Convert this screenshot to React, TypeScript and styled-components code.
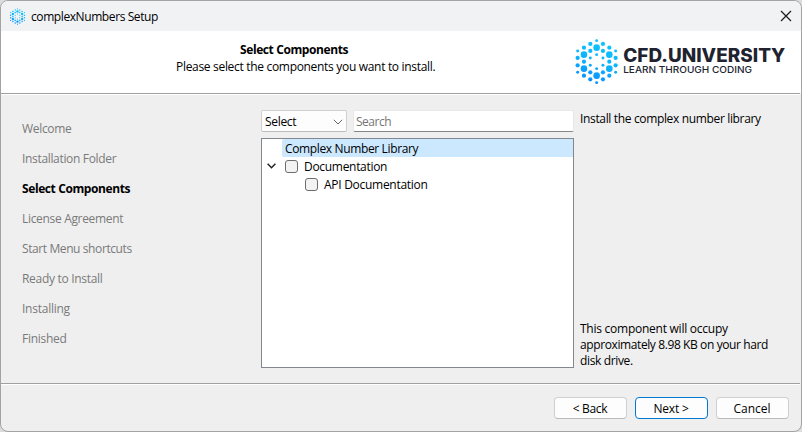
import React from "react";
import styled, { createGlobalStyle } from "styled-components";

const GlobalStyle = createGlobalStyle`
  *, *::before, *::after { box-sizing: border-box; }
  html, body { margin: 0; padding: 0; background: #dcdcdc; }
  body { font: 12px/16px "Open Sans", "Noto Sans", sans-serif; color: #000; }
`;

const Label = styled.span<{ $track?: number; $bold?: boolean; $shift?: number }>`
  display: block;
  white-space: nowrap;
  letter-spacing: ${(p) => p.$track ?? -0.35}px;
  font-weight: ${(p) => (p.$bold ? 700 : 400)};
  margin-left: ${(p) => p.$shift ?? 0}px;
`;

const Window = styled.div`
  display: flex;
  flex-direction: column;
  width: 802px;
  height: 432px;
  border: 1px solid #a3a3a3;
  border-radius: 8px;
  overflow: hidden;
  background: #efefef;
`;

const TitleBar = styled.header`
  display: flex;
  align-items: center;
  height: 30px;
  flex: none;
  padding: 0 9px 0 8px;
  background: #f1f2f4;
`;

const TitleText = styled.div`
  flex: 1;
  margin-left: 5px;
  padding-top: 1px;
`;

const CloseButton = styled.button`
  display: flex;
  padding: 0;
  border: 0;
  background: none;
`;

const Banner = styled.section`
  display: flex;
  height: 62px;
  flex: none;
  background: #fff;
`;

const BannerText = styled.div`
  display: flex;
  flex-direction: column;
  align-items: flex-start;
  gap: 1px;
  width: 573px;
  padding: 11px 0 0 175px;
`;

const Divider = styled.hr`
  width: 799px;
  height: 2px;
  flex: none;
  margin: 0;
  border: 0;
  border-top: 1px solid #a0a0a0;
  background: #fff;
`;

const Content = styled.main`
  display: flex;
  height: 288px;
  flex: none;
`;

const Steps = styled.nav`
  display: flex;
  flex-direction: column;
  gap: 14px;
  width: 260px;
  padding: 26px 0 0 21px;
`;

const Step = styled.div<{ $current?: boolean }>`
  height: 16px;
  color: ${(p) => (p.$current ? "#000" : "#7a7a7a")};
`;

const Picker = styled.div`
  display: flex;
  flex-direction: column;
  gap: 6px;
  width: 313px;
  padding-top: 15px;
`;

const Filters = styled.div`
  display: flex;
  gap: 6px;
  height: 22px;
`;

const SelectBox = styled.div`
  display: flex;
  align-items: center;
  justify-content: space-between;
  width: 86px;
  padding: 1px 3px 0 3px;
  border: 1px solid #d0d0d0;
  border-bottom-color: #bcbcbc;
  border-radius: 2px;
  background: #fdfdfd;
`;

const SearchBox = styled.div`
  flex: 1;
  padding: 3px 0 0 2px;
  border: 1px solid #e8e8e8;
  border-bottom-color: #868686;
  border-radius: 2px;
  background: #fff;
  color: #767676;
`;

const Tree = styled.div`
  height: 230px;
  border: 1px solid #828790;
  background: #fff;
`;

const TreeRow = styled.div<{ $depth: number }>`
  display: flex;
  align-items: center;
  height: 18px;
  line-height: 18px;
  padding-left: ${(p) => p.$depth * 20}px;
`;

const Expander = styled.div`
  display: flex;
  width: 20px;
  padding-left: 5px;
`;

const Item = styled.div<{ $selected?: boolean }>`
  display: flex;
  align-items: center;
  flex: 1;
  gap: 6px;
  height: 18px;
  padding-left: 3px;
  border-radius: 2px 0 0 2px;
  background: ${(p) => (p.$selected ? "#cce8ff" : "transparent")};

  ${Label} {
    padding-top: 2px;
  }
`;

const CheckBox = styled.span`
  width: 13px;
  height: 13px;
  border: 1px solid #6d6d6d;
  border-radius: 3px;
  background: #f3f3f3;
`;

const Details = styled.aside`
  display: flex;
  flex-direction: column;
  justify-content: space-between;
  padding: 16px 0 14px 6px;
`;

const Footer = styled.footer`
  display: flex;
  justify-content: flex-end;
  gap: 8px;
  padding: 12px 12px 0 0;
`;

const Button = styled.button<{ $primary?: boolean }>`
  display: flex;
  align-items: center;
  justify-content: center;
  width: 73px;
  height: 22px;
  padding: 1px 1px 0 0;
  border: 1px solid ${(p) => (p.$primary ? "#0078d4" : "#d0d0d0")};
  border-bottom-color: ${(p) => (p.$primary ? "#0078d4" : "#bababa")};
  border-radius: 4px;
  background: #fdfdfd;
  color: #000;
  font: inherit;
`;

const DOTS: [number, number, number][] = [
  [79, 31, 4.4], [60, 41, 6.3], [98, 41, 6.3], [41, 52, 6.3], [79, 52, 9.8], [117, 52, 6.3],
  [22, 62, 4.4], [60, 62, 6.3], [98, 62, 6.3], [136, 62, 4.4], [41, 73, 9.8], [79, 73, 4.4],
  [117, 73, 9.8], [22, 83, 6.3], [60, 83, 4.4], [98, 83, 4.4], [136, 83, 6.3], [41, 94, 6.3],
  [117, 94, 6.3], [22, 105, 6.3], [60, 105, 4.4], [98, 105, 4.4], [136, 105, 6.3], [41, 115, 9.8],
  [79, 115, 4.4], [117, 115, 9.8], [22, 126, 4.4], [60, 126, 6.3], [98, 126, 6.3], [136, 126, 4.4],
  [41, 136, 6.3], [79, 136, 9.8], [117, 136, 6.3], [60, 147, 6.3], [98, 147, 6.3], [79, 157, 4.4],
];

const Dots = ({ id }: { id: string }) => (
  <>
    <defs>
      <linearGradient id={id} gradientUnits="userSpaceOnUse" x1="100" y1="30" x2="58" y2="158">
        <stop offset="0" stopColor="#0cc6ff" />
        <stop offset="0.5" stopColor="#0cb4fd" />
        <stop offset="1" stopColor="#0a8dff" />
      </linearGradient>
    </defs>
    <g fill={`url(#${id})`}>
      {DOTS.map(([x, y, r]) => (
        <circle key={`${x}-${y}`} cx={x} cy={y} r={r} />
      ))}
    </g>
  </>
);

const AppIcon = () => (
  <svg width="17" height="17" viewBox="10 24 138 140">
    <Dots id="iconTint" />
  </svg>
);

const BrandLogo = () => (
  <svg width="222" height="62" viewBox="574 31 222 62">
    <g transform="translate(570.3 30.3) scale(0.33333)">
      <Dots id="logoTint" />
    </g>
    <g fill="#20232f" fontFamily="Inter, sans-serif">
      <text x="623.3" y="62.3" fontSize="18.3" fontWeight="800" textLength="162" lengthAdjust="spacingAndGlyphs">
        CFD.UNIVERSITY
      </text>
      <text x="623.2" y="73.3" fontSize="9.3" fontWeight="500" textLength="128.8" lengthAdjust="spacingAndGlyphs">
        LEARN THROUGH CODING
      </text>
    </g>
  </svg>
);

const STEPS: { name: string; track: number; current?: boolean }[] = [
  { name: "Welcome", track: -0.32 },
  { name: "Installation Folder", track: -0.33 },
  { name: "Select Components", track: -0.4, current: true },
  { name: "License Agreement", track: -0.32 },
  { name: "Start Menu shortcuts", track: -0.4 },
  { name: "Ready to Install", track: -0.3 },
  { name: "Installing", track: -0.25 },
  { name: "Finished", track: -0.28 },
];

export default function App() {
  return (
    <>
      <GlobalStyle />
      <Window>
        <TitleBar>
          <AppIcon />
          <TitleText>
            <Label $track={-0.41}>complexNumbers Setup</Label>
          </TitleText>
          <CloseButton aria-label="Close">
            <svg width="12" height="12" viewBox="0 0 12 12" fill="none" stroke="#1a1a1a" strokeWidth="1.2">
              <path d="M1 1L11 11M11 1L1 11" />
            </svg>
          </CloseButton>
        </TitleBar>
        <Banner>
          <BannerText>
            <Label $bold $track={-0.4} $shift={64}>Select Components</Label>
            <Label $track={-0.311}>Please select the components you want to install.</Label>
          </BannerText>
          <BrandLogo />
        </Banner>
        <Divider />
        <Content>
          <Steps>
            {STEPS.map((s) => (
              <Step key={s.name} $current={s.current}>
                <Label $bold={s.current} $track={s.track}>{s.name}</Label>
              </Step>
            ))}
          </Steps>
          <Picker>
            <Filters>
              <SelectBox>
                <Label $track={-0.32}>Select</Label>
                <svg width="10" height="6" viewBox="0 0 10 6" fill="none" stroke="#666" strokeWidth="1">
                  <path d="M0.8 0.8L5 5L9.2 0.8" />
                </svg>
              </SelectBox>
              <SearchBox>
                <Label $track={-0.5}>Search</Label>
              </SearchBox>
            </Filters>
            <Tree>
              <TreeRow $depth={0}>
                <Expander />
                <Item $selected>
                  <Label $track={-0.36}>Complex Number Library</Label>
                </Item>
              </TreeRow>
              <TreeRow $depth={0}>
                <Expander>
                  <svg width="9" height="6" viewBox="0 0 9 6" fill="none" stroke="#222" strokeWidth="1.5">
                    <path d="M0.6 0.8L4.5 4.7L8.4 0.8" />
                  </svg>
                </Expander>
                <Item>
                  <CheckBox />
                  <Label $track={-0.3}>Documentation</Label>
                </Item>
              </TreeRow>
              <TreeRow $depth={2}>
                <Item>
                  <CheckBox />
                  <Label $track={-0.28}>API Documentation</Label>
                </Item>
              </TreeRow>
            </Tree>
          </Picker>
          <Details>
            <Label $track={-0.346}>Install the complex number library</Label>
            <div>
              <Label $track={-0.25}>This component will occupy</Label>
              <Label $track={-0.395}>approximately 8.98 KB on your hard</Label>
              <Label $track={-0.352}>disk drive.</Label>
            </div>
          </Details>
        </Content>
        <Divider />
        <Footer>
          <Button><Label $track={-0.3}>&lt; Back</Label></Button>
          <Button $primary><Label $track={-0.2}>Next &gt;</Label></Button>
          <Button><Label $track={-0.02}>Cancel</Label></Button>
        </Footer>
      </Window>
    </>
  );
}
